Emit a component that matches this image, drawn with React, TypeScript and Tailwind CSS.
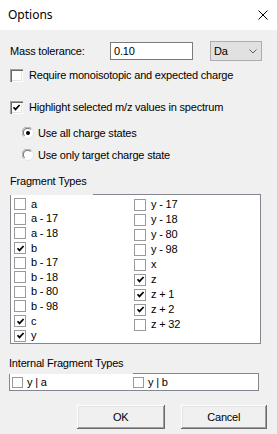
const sans = "font-['Liberation_Sans',Arial,sans-serif]";

function Tick() {
  return (
    <svg width="9" height="9" viewBox="0 0 9 9" className="block">
      <path d="M1.5 4.2 L3.5 6.4 L7.6 2" fill="none" stroke="#000" strokeWidth="1.7" />
    </svg>
  );
}

function Check3D({ checked }: { checked?: boolean }) {
  return (
    <span className="flex h-[13px] w-[13px] shrink-0 items-center justify-center bg-white shadow-[inset_1px_1px_#a0a0a0,inset_2px_2px_#696969,inset_-1px_-1px_#ffffff,inset_-2px_-2px_#e3e3e3]">
      {checked && <Tick />}
    </span>
  );
}

function FlatCheck({ checked, size = 12 }: { checked?: boolean; size?: number }) {
  return (
    <span
      className="flex shrink-0 items-center justify-center border border-[#9a9a9a] bg-white"
      style={{ width: size, height: size }}
    >
      {checked && <Tick />}
    </span>
  );
}

function Radio({ checked }: { checked?: boolean }) {
  return (
    <svg width="12" height="12" viewBox="0 0 12 12" className="block shrink-0">
      <circle cx="6" cy="6" r="5.5" fill="#fff" stroke="#e3e3e3" />
      <path d="M1.6 9.4 A5.3 5.3 0 0 1 9.4 1.6" fill="none" stroke="#a0a0a0" />
      <path d="M2.6 8.6 A4.2 4.2 0 0 1 8.6 2.6" fill="none" stroke="#696969" />
      {checked && <circle cx="6" cy="6" r="2" fill="#000" />}
    </svg>
  );
}

const leftItems: [string, boolean][] = [
  ["a", false],
  ["a - 17", false],
  ["a - 18", false],
  ["b", true],
  ["b - 17", false],
  ["b - 18", false],
  ["b - 80", false],
  ["b - 98", false],
  ["c", true],
  ["y", true],
];

const rightItems: [string, boolean][] = [
  ["y - 17", false],
  ["y - 18", false],
  ["y - 80", false],
  ["y - 98", false],
  ["x", false],
  ["z", true],
  ["z + 1", true],
  ["z + 2", true],
  ["z + 32", false],
];

function Column({ items }: { items: [string, boolean][] }) {
  return (
    <div className="flex w-[120px] flex-col">
      {items.map(([label, on]) => (
        <div key={label} className="flex h-[15px] items-center">
          <FlatCheck checked={on} />
          <span className="ml-[5px] leading-none">{label}</span>
        </div>
      ))}
    </div>
  );
}

function Button({ label, width }: { label: string; width: number }) {
  return (
    <button
      className="flex h-[24px] items-center justify-center bg-[#f0f0f0] leading-none text-black shadow-[inset_-1px_-1px_#696969,inset_1px_1px_#ffffff,inset_-2px_-2px_#a0a0a0,inset_2px_2px_#e3e3e3]"
      style={{ width }}
    >
      {label}
    </button>
  );
}

export default function App() {
  return (
    <div className={`h-[434px] w-[277px] overflow-hidden bg-[#f0f0f0] text-[11px] tracking-[-0.2px] text-black ${sans}`}>
      <div className="flex h-[30px] items-center justify-between bg-white pl-[8px] pr-[9px]">
        <span className="font-['Noto_Sans',sans-serif] text-[12px] tracking-normal">Options</span>
        <svg width="10" height="10" viewBox="0 0 10 10" className="block">
          <path d="M0.5 0.5 L9.5 9.5 M9.5 0.5 L0.5 9.5" stroke="#000" strokeWidth="1" />
        </svg>
      </div>

      <div className="flex flex-col px-[10px]">
        <div className="mt-[11px] flex h-[20px] items-center">
          <span className="w-[100px] leading-none">Mass tolerance:</span>
          <div className="flex h-[18px] w-[83px] items-center border border-[#7a7a7a] bg-white pl-[3px] leading-none">
            0.10
          </div>
          <div className="ml-[17px] flex h-[20px] w-[52px] items-center justify-between border border-[#adadad] bg-[#e1e1e1] pl-[3px] pr-[4px] leading-none">
            <span>Da</span>
            <svg width="8" height="5" viewBox="0 0 8 5" className="block">
              <path d="M0.5 0.5 L4 4 L7.5 0.5" fill="none" stroke="#606060" />
            </svg>
          </div>
        </div>

        <div className="mt-[8px] flex h-[13px] items-center">
          <Check3D />
          <span className="ml-[6px] leading-none">Require monoisotopic and expected charge</span>
        </div>

        <div className="mt-[19px] flex h-[13px] items-center">
          <Check3D checked />
          <span className="ml-[6px] leading-none">Highlight selected m/z values in spectrum</span>
        </div>

        <div className="mt-[13px] flex h-[12px] items-center pl-[12px]">
          <Radio checked />
          <span className="ml-[4px] leading-none">Use all charge states</span>
        </div>

        <div className="mt-[10px] flex h-[12px] items-center pl-[12px]">
          <Radio />
          <span className="ml-[4px] leading-none">Use only target charge state</span>
        </div>

        <div className="relative z-10 -mb-px mt-[13px] h-[21px] w-[83px] bg-[#f0f0f0] leading-[14px]">
          Fragment Types
        </div>
        <div className="flex h-[150px] w-[251px] border border-[#828790] bg-white pl-[3px] pt-[2px]">
          <Column items={leftItems} />
          <Column items={rightItems} />
        </div>

        <div className="relative z-10 -mb-px -ml-px mt-[12px] h-[18px] w-[124px] bg-[#f0f0f0] leading-[14px]">
          Internal Fragment Types
        </div>
        <div className="-ml-px flex h-[18px] w-[250px] items-center border border-[#828790] bg-white pl-[2px]">
          <div className="flex w-[121px] items-center">
            <FlatCheck size={11} />
            <span className="ml-[4px] leading-none">y | a</span>
          </div>
          <div className="flex items-center">
            <FlatCheck size={11} />
            <span className="ml-[4px] leading-none">y | b</span>
          </div>
        </div>

        <div className="mt-[14px] flex gap-[16px] pl-[67px]">
          <Button label="OK" width={88} />
          <Button label="Cancel" width={87} />
        </div>
      </div>
    </div>
  );
}
